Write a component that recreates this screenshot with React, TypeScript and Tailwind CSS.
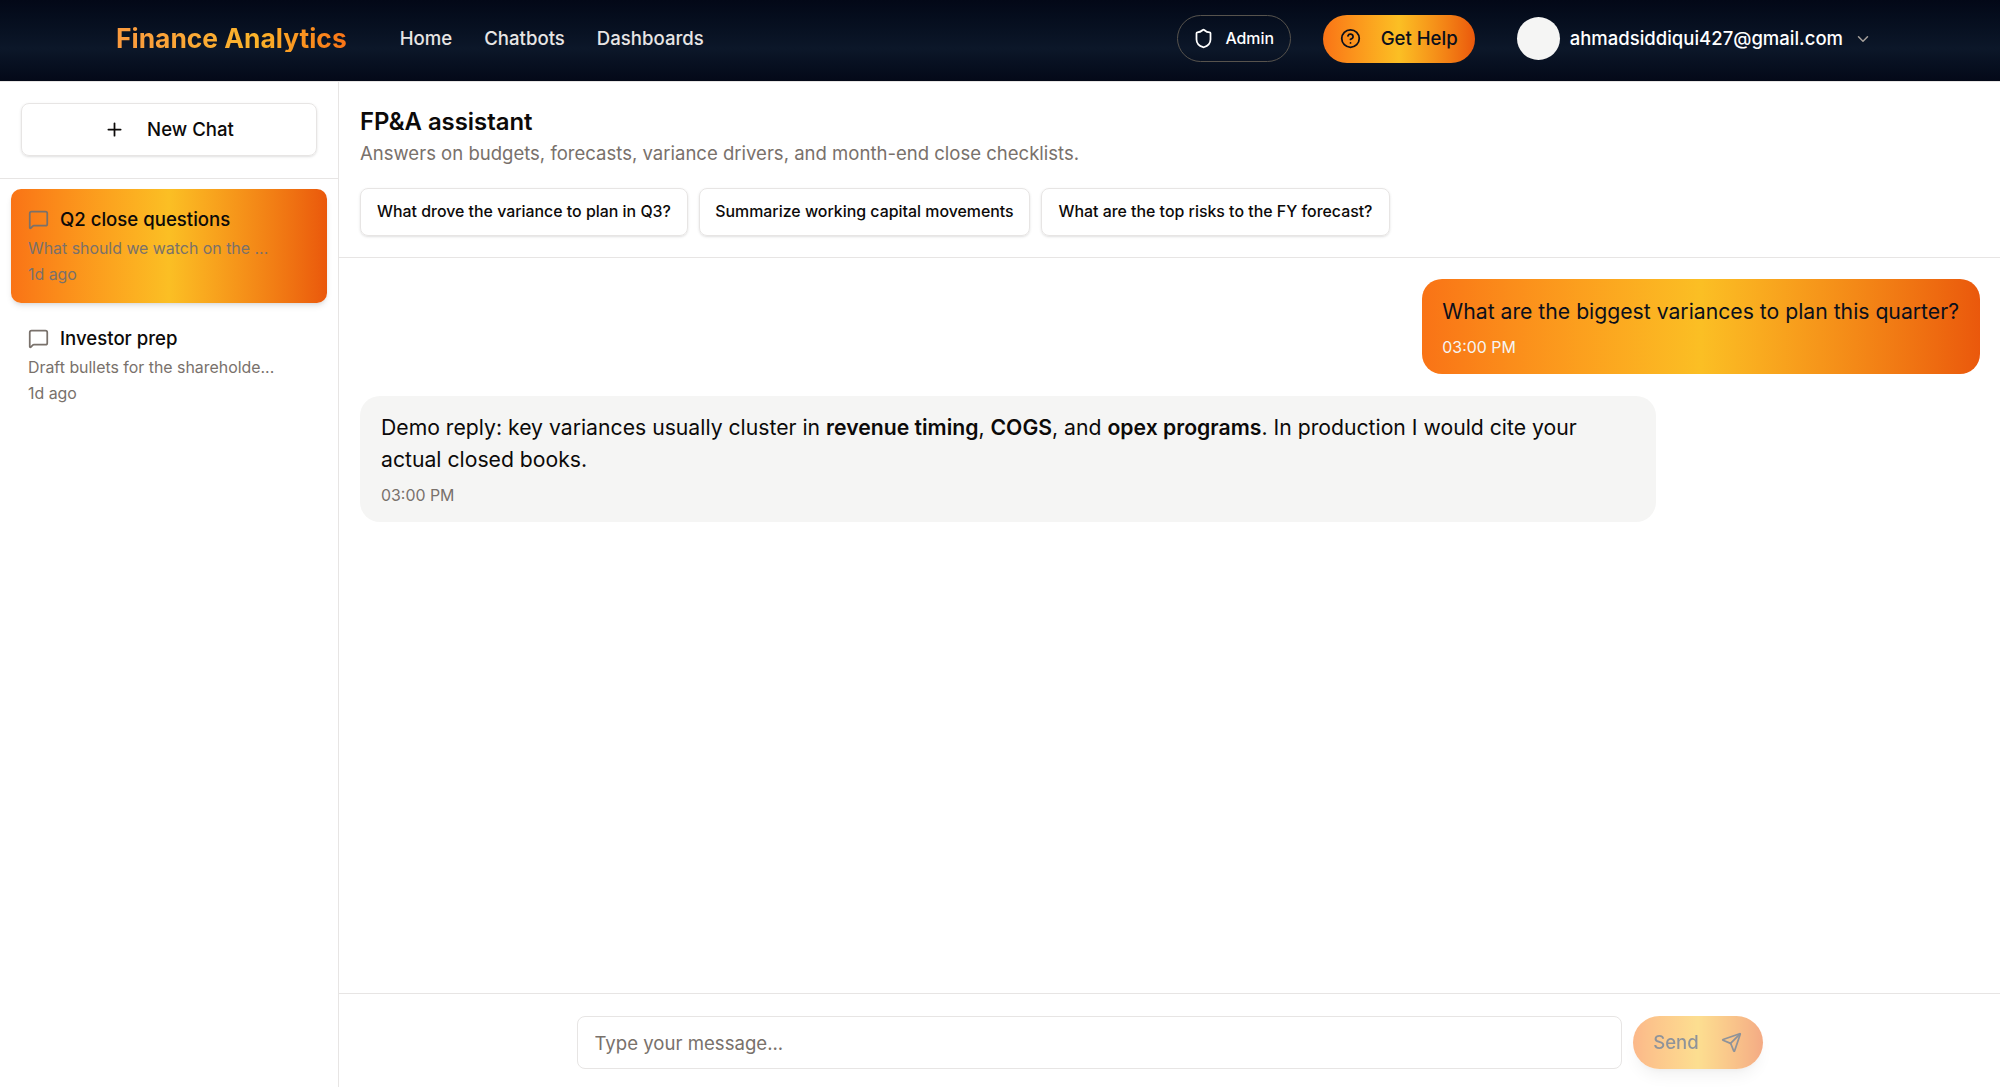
import { ChevronDown, CircleHelp, MessageSquare, Plus, Send, Shield } from "lucide-react";

const suggestions = [
  { label: "What drove the variance to plan in Q3?", width: "w-[328px]" },
  { label: "Summarize working capital movements", width: "w-[331px]" },
  { label: "What are the top risks to the FY forecast?", width: "w-[349px]" },
];

const chats = [
  { title: "Q2 close questions", preview: "What should we watch on the ...", time: "1d ago", active: true },
  { title: "Investor prep", preview: "Draft bullets for the shareholde...", time: "1d ago", active: false },
];

function Header() {
  return (
    <header className="flex h-[82px] shrink-0 items-center border-b border-stone-200 bg-gradient-to-b from-[#030817] via-[#0c1729] via-60% to-[#040918] pb-[4px] pl-[116px] pr-[128px]">
      <div className="bg-gradient-to-r from-[#fb9a3e] via-[#fbb42a] via-60% to-[#f97316] bg-clip-text text-[26.4px] font-bold leading-none text-transparent">
        Finance Analytics
      </div>

      <nav className="ml-[53px] flex items-center gap-8 text-[18.6px] font-medium text-stone-200">
        <a>Home</a>
        <a>Chatbots</a>
        <a>Dashboards</a>
      </nav>

      <div className="ml-auto flex items-center">
        <button className="flex h-[47px] w-[114px] items-center justify-center gap-[11px] rounded-full border border-stone-600 text-[15.9px] font-medium text-white">
          <Shield className="h-[21px] w-[21px]" strokeWidth={2} />
          Admin
        </button>

        <button className="ml-8 flex h-[48px] w-[152px] items-center justify-center gap-[20px] rounded-full bg-gradient-to-r from-[#f97316] via-[#fbbf24] to-[#ea580c] text-[18.6px] font-medium text-[#0a0f1c]">
          <CircleHelp className="h-[21px] w-[21px]" strokeWidth={2} />
          Get Help
        </button>

        <div className="ml-[42px] h-[43px] w-[43px] rounded-full bg-stone-100" />
        <span className="ml-[10px] text-[18.5px] font-medium text-white">ahmadsiddiqui427@gmail.com</span>
        <ChevronDown className="ml-[11px] h-[18px] w-[18px] text-stone-400" strokeWidth={2} />
      </div>
    </header>
  );
}

function Sidebar() {
  return (
    <aside className="flex w-[339px] shrink-0 flex-col border-r border-stone-200">
      <div className="h-[97px] shrink-0 border-b border-stone-200 px-[21px] pt-[21px]">
        <button className="flex h-[53px] w-full items-center justify-center gap-[22px] rounded-lg border border-stone-200 text-[18.6px] font-medium text-[#0c0a09] shadow-sm">
          <Plus className="h-[21px] w-[21px]" strokeWidth={2} />
          New Chat
        </button>
      </div>

      <div className="flex flex-col gap-[5px] px-[11px] pt-[10px]">
        {chats.map((chat) => (
          <div
            key={chat.title}
            className={
              chat.active
                ? "h-[114px] rounded-[10px] bg-gradient-to-r from-[#f97316] via-[#fbbf24] to-[#ea580c] px-[17px] pt-[17px] shadow-md"
                : "h-[114px] rounded-[10px] px-[17px] pt-[17px]"
            }
          >
            <div className="flex h-[27px] items-center gap-[11px] text-[18.6px] font-medium leading-none text-[#0c0a09]">
              <MessageSquare className="h-[21px] w-[21px] text-stone-500" strokeWidth={2} />
              {chat.title}
            </div>
            <div className="mt-[3px] text-[15.9px] leading-[26px] text-stone-500">{chat.preview}</div>
            <div className="text-[15.9px] leading-[26px] text-stone-500">{chat.time}</div>
          </div>
        ))}
      </div>
    </aside>
  );
}

function Conversation() {
  return (
    <main className="flex min-w-0 flex-1 flex-col">
      <div className="h-[176px] shrink-0 border-b border-stone-200 px-[21px] pt-[22px]">
        <h1 className="text-[23.9px] font-semibold leading-[35px] text-[#0c0a09]">FP&amp;A assistant</h1>
        <p className="text-[18.55px] leading-[28px] text-stone-500">
          Answers on budgets, forecasts, variance drivers, and month-end close checklists.
        </p>
        <div className="mt-[21px] flex gap-[11px]">
          {suggestions.map((s) => (
            <button
              key={s.label}
              className={`${s.width} h-[48px] rounded-lg border border-stone-200 text-[15.9px] font-medium text-[#0c0a09] shadow-sm`}
            >
              {s.label}
            </button>
          ))}
        </div>
      </div>

      <div className="flex flex-1 flex-col gap-[22px] pl-[21px] pr-[20px] pt-[21px]">
        <div className="self-end rounded-[20px] bg-gradient-to-r from-[#f97316] via-[#fbbf24] to-[#ea580c] pb-[14px] pl-[20px] pr-[21px] pt-[16px]">
          <p className="text-[21.2px] leading-[32px] text-[#0a0f1c]">What are the biggest variances to plan this quarter?</p>
          <p className="mt-[9px] text-[15.9px] leading-[24px] text-stone-100">03:00 PM</p>
        </div>

        <div className="w-[1296px] rounded-[20px] bg-stone-100 px-[21px] pb-[14px] pt-[15px]">
          <p className="text-[21.2px] leading-[32px] text-[#0c0a09]">
            Demo reply: key variances usually cluster in <strong className="font-semibold">revenue timing</strong>,{" "}
            <strong className="font-semibold">COGS</strong>, and <strong className="font-semibold">opex programs</strong>.
            In production I would cite your actual closed books.
          </p>
          <p className="mt-[9px] text-[15.9px] leading-[24px] text-stone-500">03:00 PM</p>
        </div>
      </div>

      <div className="flex h-[94px] shrink-0 justify-center gap-[11px] border-t border-stone-200 pt-[22px]">
        <input
          placeholder="Type your message..."
          className="h-[53px] w-[1045px] rounded-lg border border-stone-200 px-[17px] text-[18.6px] placeholder:text-stone-500"
        />
        <button className="flex h-[53px] w-[130px] items-center justify-center gap-[22px] rounded-full bg-gradient-to-r from-[#f97316] via-[#fbbf24] to-[#ea580c] text-[18.6px] font-medium text-[#1f2937] opacity-50 shadow-lg">
          Send
          <Send className="h-[21px] w-[21px]" strokeWidth={2} />
        </button>
      </div>
    </main>
  );
}

export default function App() {
  return (
    <div className="flex h-screen flex-col overflow-hidden bg-white font-['Inter',sans-serif]">
      <Header />
      <div className="flex min-h-0 flex-1">
        <Sidebar />
        <Conversation />
      </div>
    </div>
  );
}
